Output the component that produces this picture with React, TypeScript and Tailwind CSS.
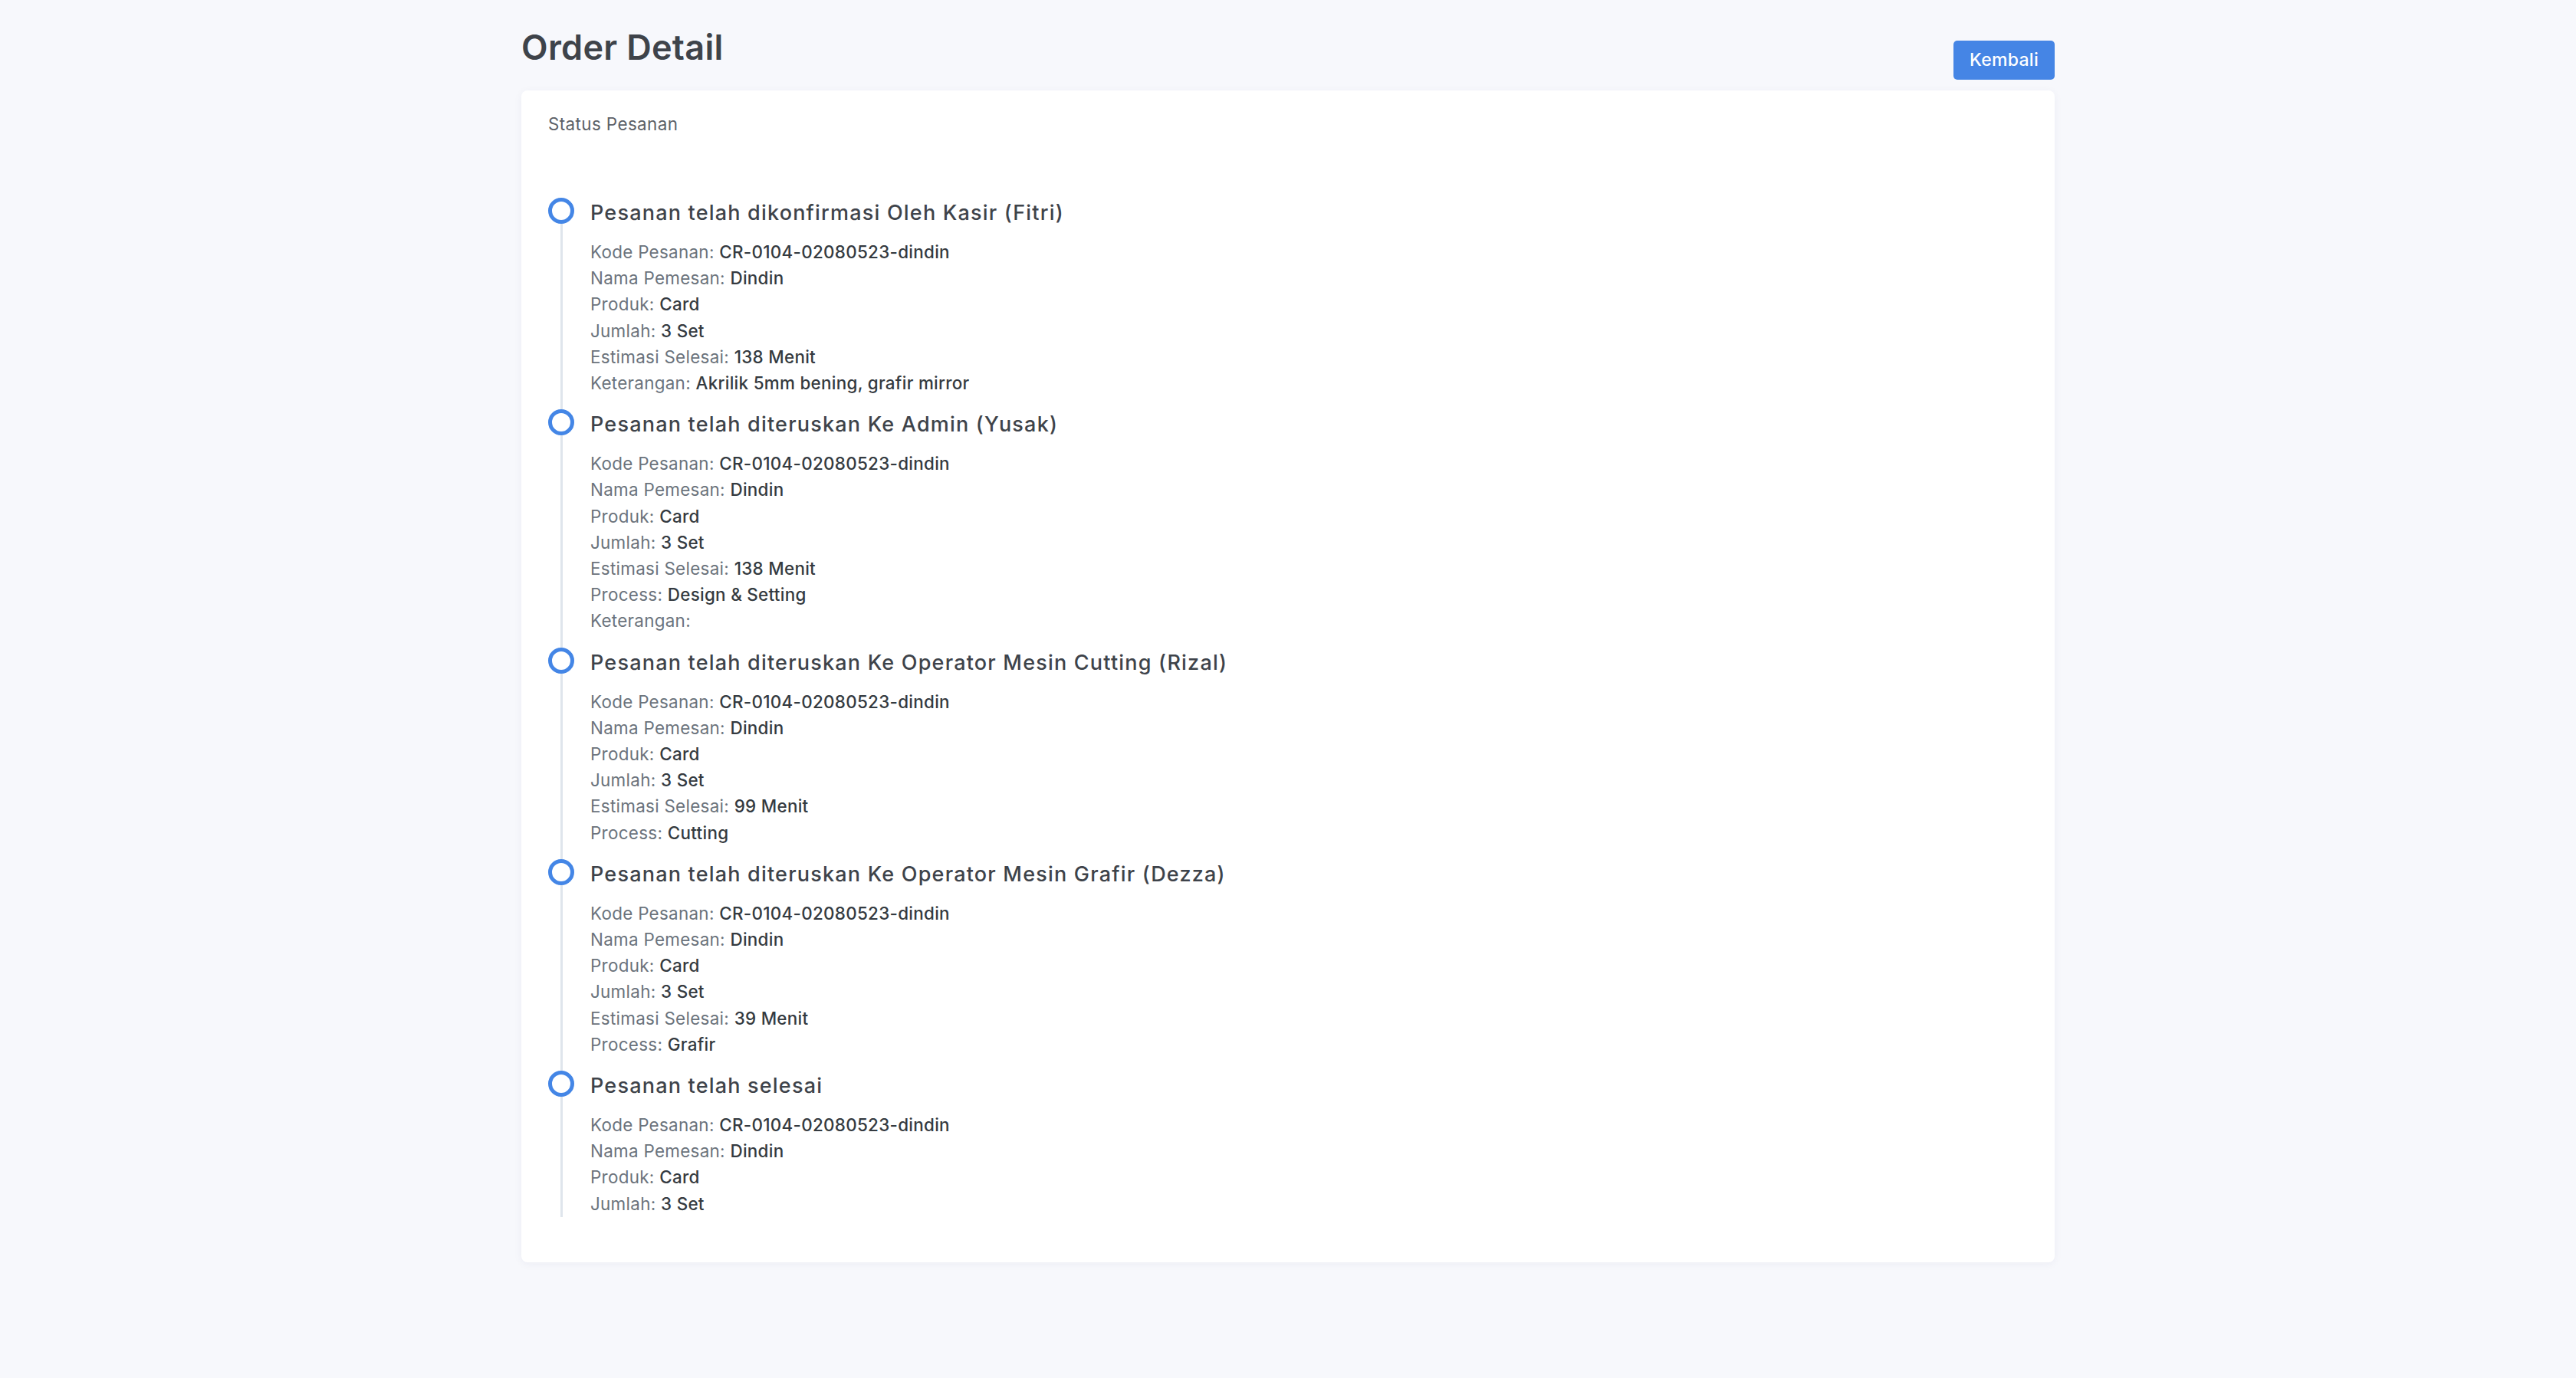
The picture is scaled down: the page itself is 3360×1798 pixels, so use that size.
import React from 'react'

type Row = { label: string; value: string }

type Step = {
  title: string
  rows: Row[]
}

const base: Row[] = [
  { label: 'Kode Pesanan', value: 'CR-0104-02080523-dindin' },
  { label: 'Nama Pemesan', value: 'Dindin' },
  { label: 'Produk', value: 'Card' },
  { label: 'Jumlah', value: '3 Set' },
]

const STEPS: Step[] = [
  {
    title: 'Pesanan telah dikonfirmasi Oleh Kasir (Fitri)',
    rows: [
      ...base,
      { label: 'Estimasi Selesai', value: '138 Menit' },
      { label: 'Keterangan', value: 'Akrilik 5mm bening, grafir mirror' },
    ],
  },
  {
    title: 'Pesanan telah diteruskan Ke Admin (Yusak)',
    rows: [
      ...base,
      { label: 'Estimasi Selesai', value: '138 Menit' },
      { label: 'Process', value: 'Design & Setting' },
      { label: 'Keterangan', value: '' },
    ],
  },
  {
    title: 'Pesanan telah diteruskan Ke Operator Mesin Cutting (Rizal)',
    rows: [
      ...base,
      { label: 'Estimasi Selesai', value: '99 Menit' },
      { label: 'Process', value: 'Cutting' },
    ],
  },
  {
    title: 'Pesanan telah diteruskan Ke Operator Mesin Grafir (Dezza)',
    rows: [
      ...base,
      { label: 'Estimasi Selesai', value: '39 Menit' },
      { label: 'Process', value: 'Grafir' },
    ],
  },
  {
    title: 'Pesanan telah selesai',
    rows: base,
  },
]

function TimelineItem({ step, last }: { step: Step; last: boolean }) {
  return (
    <li className="flex">
      {/* bulatan + garis */}
      <div className="flex w-[34px] flex-shrink-0 flex-col items-center">
        <div className="h-[34px] w-[34px] rounded-full border-[5px] border-[#4486e6] bg-white" />
        <div className="w-[3px] flex-1 bg-[#dfe5ec]" />
      </div>

      <div className={`ml-[21px] ${last ? '' : 'pb-[17px]'}`}>
        <h4 className="text-[27px] leading-[40px] font-medium tracking-[1.2px] text-[#3e434a]">
          {step.title}
        </h4>
        <div className="mt-[14px] flex flex-col">
          {step.rows.map((row, i) => (
            <p key={i} className="text-[22.4px] leading-[34.2px] tracking-[0.3px] text-[#6b737c]">
              {row.label}: <span className="font-medium text-[#343a40]">{row.value}</span>
            </p>
          ))}
        </div>
      </div>
    </li>
  )
}

export default function App() {
  return (
    <div
      className="min-h-screen bg-[#f7f8fc]"
      style={{ fontFamily: 'Inter, "Noto Sans", sans-serif' }}
    >
      <div className="mx-auto w-[2000px] pt-[35px]">
        {/* Header */}
        <div className="flex items-start justify-between">
          <h1 className="text-[45px] leading-[54px] font-semibold tracking-[0.3px] text-[#3e434a]">
            Order Detail
          </h1>
          <button className="mt-[18px] h-[51px] w-[132px] rounded-[5px] bg-[#4585e5] text-[23px] font-medium tracking-[0.3px] text-white">
            Kembali
          </button>
        </div>

        {/* Card */}
        <div className="mt-[14px] rounded-[8px] bg-white px-[35px] pt-[27px] pb-[59px] shadow-[0_2px_12px_rgba(30,40,90,0.05)]">
          <p className="text-[22.4px] leading-[34px] tracking-[0.4px] text-[#5c6168]">Status Pesanan</p>

          <ul className="mt-[79px] flex flex-col">
            {STEPS.map((step, i) => (
              <TimelineItem key={i} step={step} last={i === STEPS.length - 1} />
            ))}
          </ul>
        </div>
      </div>
    </div>
  )
}
